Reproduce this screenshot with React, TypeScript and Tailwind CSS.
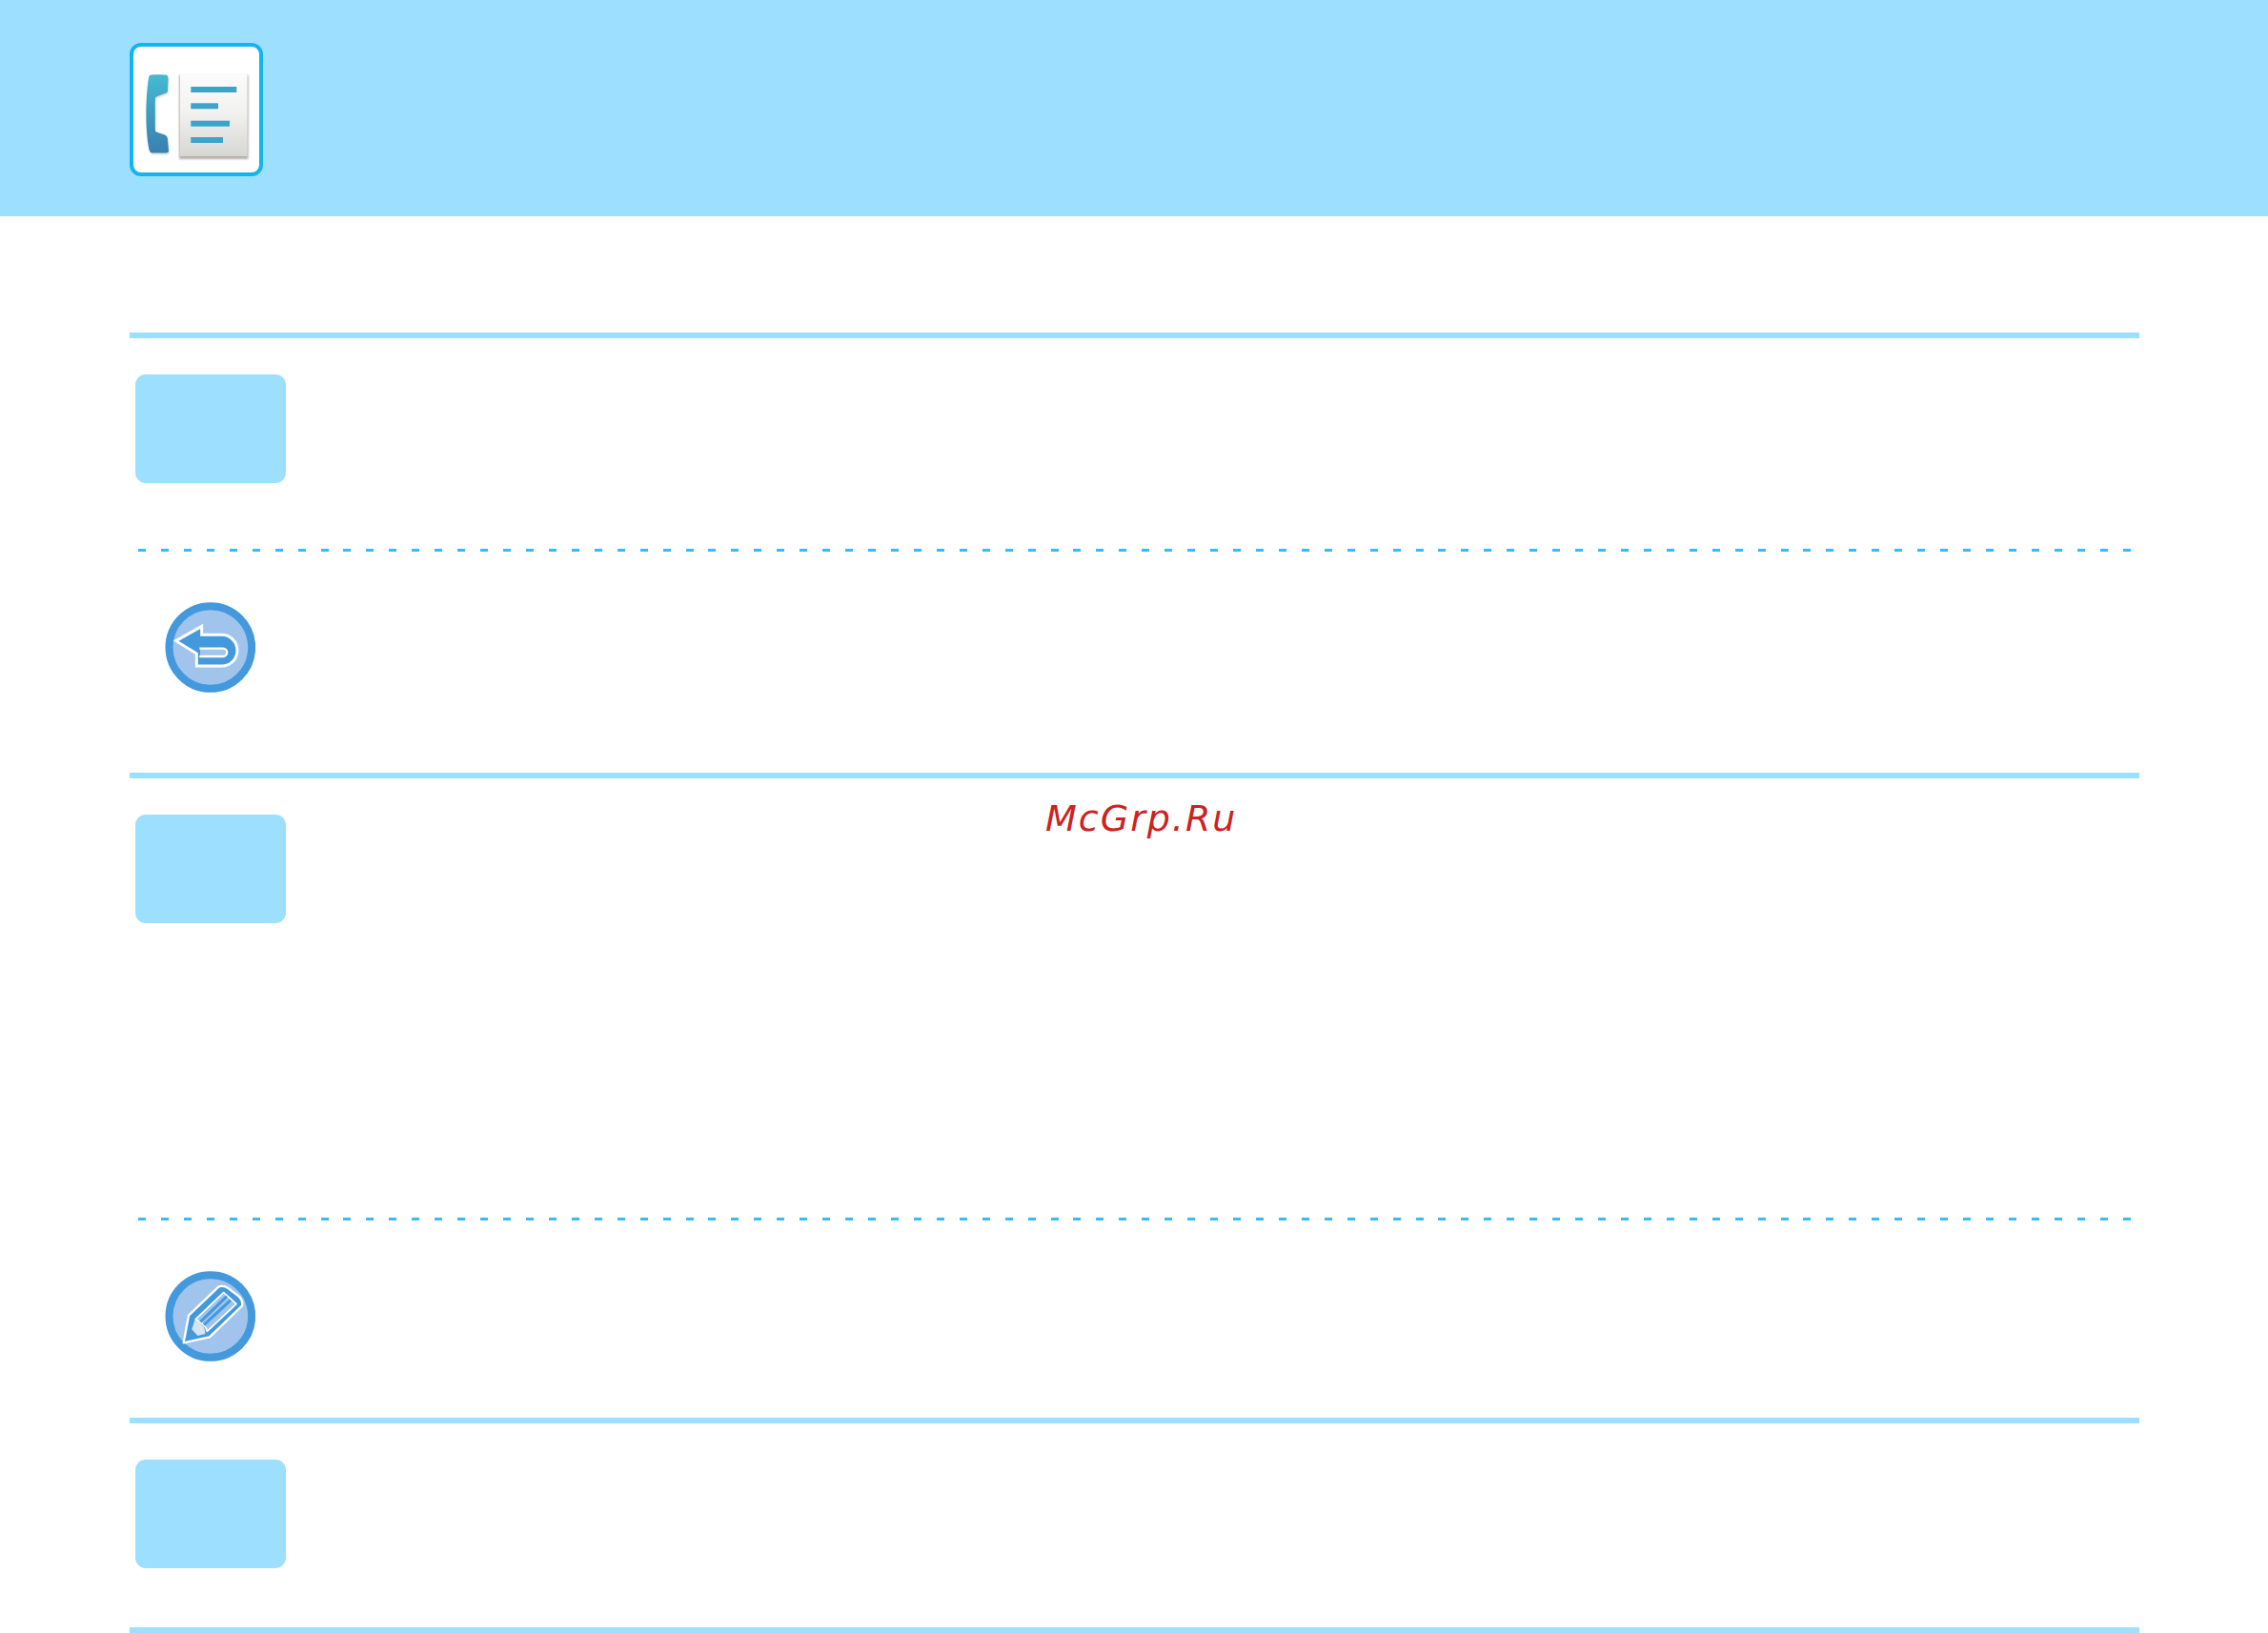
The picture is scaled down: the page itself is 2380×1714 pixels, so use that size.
import React from 'react';

const dashes = Array.from({ length: 88 }, (_, i) => i);

function StepBox() {
  return <div className="ml-[6px] h-[114px] w-[158px] rounded-[11px] bg-[#9ddfff]" />;
}

function DashedRule() {
  return (
    <div className="mx-[9px] flex h-[3px] justify-between">
      {dashes.map((i) => (
        <span key={i} className="h-[3px] w-2 bg-[#36bbff]" />
      ))}
    </div>
  );
}

function FaxIcon() {
  return (
    <svg width="132" height="132" viewBox="4 4 132 132">
      <defs>
        <linearGradient id="phone" x1="0" y1="0" x2="0" y2="1">
          <stop offset="0" stopColor="#45bad2" />
          <stop offset="1" stopColor="#3a7fb0" />
        </linearGradient>
        <linearGradient id="paper" x1="0" y1="0" x2="0" y2="1">
          <stop offset="0" stopColor="#fbfbfb" />
          <stop offset="0.45" stopColor="#f2f2f1" />
          <stop offset="1" stopColor="#d6d6d3" />
        </linearGradient>
        <filter id="soft" x="-10%" y="-10%" width="120%" height="120%">
          <feGaussianBlur stdDeviation="0.6" />
        </filter>
        <filter id="softer" x="-10%" y="-10%" width="120%" height="120%">
          <feGaussianBlur stdDeviation="1.2" />
        </filter>
      </defs>
      <path d="M21 34 Q23 33 38 33.500 Q40.500 34 40.500 37 L40 50 Q40 52.500 37 53 L28 56.500 Q26.800 57 26.800 59 L26.800 91 Q26.800 93 28 93.500 L37 96.500 Q39.500 97.500 39.800 100 L41 113 Q41 115.500 38 115.500 L24 115.500 Q21.500 115.500 20.500 112 C16.500 92 16.500 58 20 37 Q20.300 35 21 34 Z" fill="#8a9ba8" opacity="0.4" filter="url(#softer)" transform="translate(0.5 1.5)" />
      <path d="M21 34 Q23 33 38 33.500 Q40.500 34 40.500 37 L40 50 Q40 52.500 37 53 L28 56.500 Q26.800 57 26.800 59 L26.800 91 Q26.800 93 28 93.500 L37 96.500 Q39.500 97.500 39.800 100 L41 113 Q41 115.500 38 115.500 L24 115.500 Q21.500 115.500 20.500 112 C16.500 92 16.500 58 20 37 Q20.300 35 21 34 Z" fill="url(#phone)" filter="url(#soft)" />
      <rect x="52" y="34" width="72.500" height="88" fill="#a59c95" opacity="0.8" filter="url(#softer)" />
      <rect x="53" y="33" width="70.500" height="86" fill="url(#paper)" />
      <rect x="64.300" y="46" width="48" height="6" fill="#3ea3c8" filter="url(#soft)" />
      <rect x="64.300" y="63.300" width="28.700" height="6" fill="#3ea3c8" filter="url(#soft)" />
      <rect x="64.300" y="81.700" width="40.700" height="6" fill="#3ea3c8" filter="url(#soft)" />
      <rect x="64.300" y="99" width="33.700" height="6" fill="#3ea3c8" filter="url(#soft)" />
    </svg>
  );
}

function BackIcon() {
  return (
    <svg width="95" height="95" viewBox="39 36 285 285" className="block">
      <circle cx="182.500" cy="178.500" r="130" fill="#a0c4ec" stroke="#4499dd" strokeWidth="24" />
      <path d="M74 158 L155 112 V139 H218 A 49 49 0 0 1 218 237 H139 V198 Z" fill="#4499dd" stroke="#fff" strokeWidth="9" />
      <path d="M150 182 H222 A 12.500 12.500 0 0 1 222 207 H150 Z" fill="#a0c4ec" />
      <path d="M148 182 H222 A 12.500 12.500 0 0 1 222 207 H148" fill="none" stroke="#fff" strokeWidth="7" />
    </svg>
  );
}

function NoteIcon() {
  return (
    <svg width="95" height="95" viewBox="39 42 285 285" className="block">
      <circle cx="182.500" cy="184.500" r="130" fill="#a0c4ec" stroke="#4499dd" strokeWidth="24" />
      <path d="M98 268 L114 182 L208 92 Q222 86 238 96 L272 122 Q286 136 282 152 L180 250 Z" fill="#4499dd" stroke="#fff" strokeWidth="7" strokeLinejoin="round" />
      <path d="M136 194 L224 110 L264 146 L172 232 Q170 212 136 194 Z" fill="#a0c4ec" stroke="#fff" strokeWidth="5" strokeLinejoin="round" />
      <path d="M151 202 L234 122 M162 212 L246 134" stroke="#4499dd" strokeWidth="9" />
      <path d="M134 194 Q168 212 166 240 L142 246 L124 226 Z" fill="#d5e4f6" />
      <path d="M103 263 L116 222 L142 247 Z" fill="#4499dd" />
    </svg>
  );
}

export default function App() {
  return (
    <div className="h-[1714px] w-[2380px] overflow-hidden bg-white">
      <header className="flex h-[227px] items-center bg-[#9ddfff] pl-[136px]">
        <div className="mb-[-3px] flex h-[140px] w-[140px] items-center justify-center rounded-[12px] border-4 border-[#12b5ee] bg-white">
          <FaxIcon />
        </div>
      </header>

      <main className="ml-[136px] mt-[122px] w-[2109px]">
        <section className="h-[462px] border-t-[6px] border-[#9ddfff] pt-[38px]">
          <StepBox />
          <div className="mt-[69px]">
            <DashedRule />
          </div>
          <div className="ml-[37px] mt-[53px]">
            <BackIcon />
          </div>
        </section>

        <section className="relative h-[677px] border-t-[6px] border-[#9ddfff] pt-[38px]">
          <StepBox />
          <span className="absolute left-[961px] top-[14px] font-['DejaVu_Sans',sans-serif] text-[38px] italic leading-[56px] tracking-[2px] text-[#cc2222]">
            McGrp.Ru
          </span>
          <div className="mt-[309px]">
            <DashedRule />
          </div>
          <div className="ml-[37px] mt-[53px]">
            <NoteIcon />
          </div>
        </section>

        <section className="h-[220px] border-t-[6px] border-[#9ddfff] pt-[38px]">
          <StepBox />
        </section>

        <div className="h-[6px] bg-[#9ddfff]" />
      </main>
    </div>
  );
}
